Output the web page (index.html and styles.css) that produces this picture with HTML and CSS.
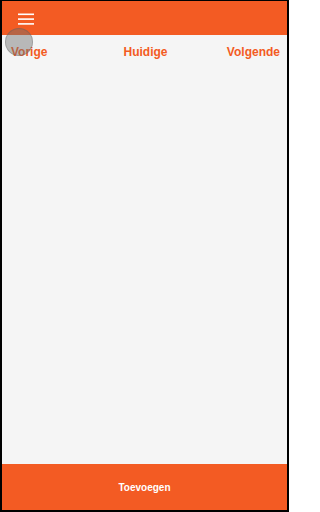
FILE: index.html
```html
<!DOCTYPE html>
<html lang="nl">
<head>
<meta charset="utf-8">
<title>Planning</title>
<link rel="stylesheet" href="styles.css">
</head>
<body>
<div class="app">
  <header class="topbar">
    <button class="menu-btn" aria-label="Menu">
      <svg width="16" height="12" viewBox="0 0 16 12"><rect x="0" y="0.5" width="16" height="1.6" fill="#fff"/><rect x="0" y="5.3" width="16" height="1.6" fill="#fff"/><rect x="0" y="10.1" width="16" height="1.6" fill="#fff"/></svg>
    </button>
  </header>
  <nav class="tabs">
    <span class="tab tab-left">Vorige</span>
    <span class="tab tab-center">Huidige</span>
    <span class="tab tab-right">Volgende</span>
  </nav>
  <main class="content"></main>
  <footer class="bottombar">
    <button class="add-btn">Toevoegen</button>
  </footer>
  <span class="ripple"></span>
</div>
</body>
</html>
```
FILE: styles.css
```css
* { box-sizing: border-box; }
html, body { margin: 0; padding: 0; }
body {
  width: 289px;
  height: 512px;
  font-family: "Liberation Sans", Arial, sans-serif;
  background: #ffffff;
}
.app {
  position: relative;
  width: 289px;
  height: 512px;
  border-style: solid;
  border-color: #000;
  border-width: 1px 2px 2px 2px;
  background: #f5f5f5;
  display: flex;
  flex-direction: column;
  overflow: hidden;
}
.topbar {
  height: 34px;
  background: #f35b23;
  display: flex;
  align-items: center;
  padding-left: 16px;
  flex: none;
}
.menu-btn {
  border: 0;
  background: transparent;
  padding: 0;
  margin-top: 2px;
  display: flex;
}
.tabs {
  display: grid;
  grid-template-columns: 1fr 1fr 1fr;
  align-items: center;
  padding: 2px 7px 0 9px;
  height: 32px;
  flex: none;
}
.tab {
  color: #f35b23;
  font-weight: bold;
  font-size: 12px;
}
.tab-left { justify-self: start; }
.tab-center { justify-self: center; }
.tab-right { justify-self: end; }
.content { flex: 1; }
.bottombar {
  height: 46px;
  background: #f35b23;
  display: flex;
  align-items: center;
  justify-content: center;
  flex: none;
}
.add-btn {
  border: 0;
  background: transparent;
  color: #fff;
  font-family: "Liberation Sans", Arial, sans-serif;
  font-weight: bold;
  font-size: 10px;
  padding: 0;
}
.ripple {
  position: absolute;
  left: 3px;
  top: 27px;
  width: 28px;
  height: 28px;
  border-radius: 50%;
  background: rgba(110, 110, 110, 0.45);
  border: 1px solid rgba(90, 90, 90, 0.3);
}
```
